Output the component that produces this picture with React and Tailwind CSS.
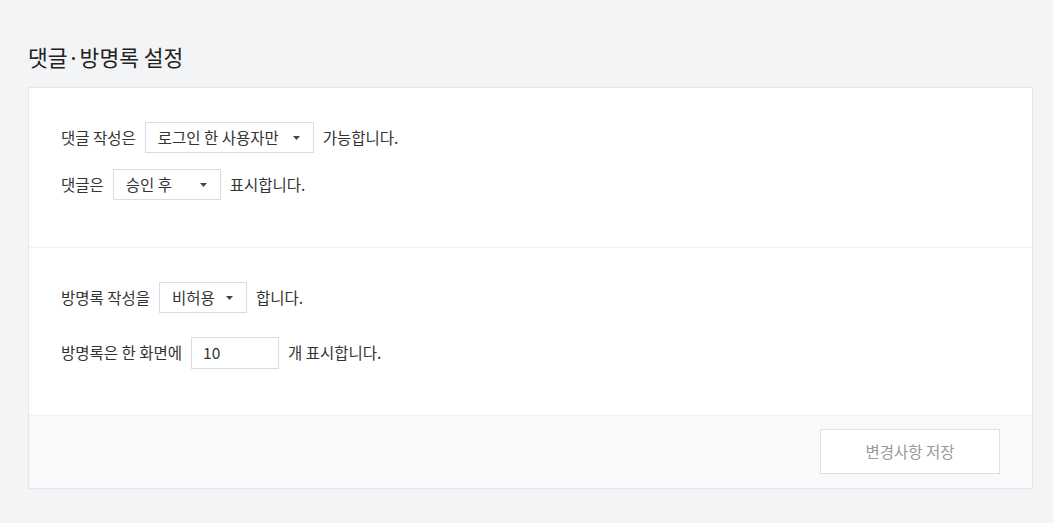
const font = { fontFamily: '"Noto Sans CJK KR", "Noto Sans", sans-serif' };

function Caret() {
  return (
    <svg width="7" height="4" viewBox="0 0 7 4" className="shrink-0">
      <path d="M0 0h7L3.5 4z" fill="#444" />
    </svg>
  );
}

function Select({ value, width }) {
  return (
    <div
      className={`flex h-[31px] items-center justify-between border border-[#d9dce0] bg-white pl-3 pr-[13px] text-[15.5px] text-[#333] ${width}`}
    >
      <span>{value}</span>
      <Caret />
    </div>
  );
}

function Row({ children }) {
  return <div className="flex h-[31px] items-center gap-[9px] text-[15.5px] text-[#333]">{children}</div>;
}

export default function App() {
  return (
    <div className="min-h-[523px] bg-[#f3f4f6] px-[28px] pt-[42px]" style={font}>
      <h2 className="mb-[15px] text-[21.5px] leading-[30px] text-[#222]">댓글·방명록 설정</h2>
      <div className="w-[1005px] border border-[#e3e5e8] bg-white">
        <section className="flex flex-col gap-[16px] border-b border-[#eef0f2] px-[32px] pt-[34px] pb-[47px]">
          <Row>
            <span>댓글 작성은</span>
            <Select value="로그인 한 사용자만" width="w-[169px]" />
            <span>가능합니다.</span>
          </Row>
          <Row>
            <span>댓글은</span>
            <Select value="승인 후" width="w-[108px]" />
            <span>표시합니다.</span>
          </Row>
        </section>
        <section className="flex flex-col gap-[24px] border-b border-[#eef0f2] px-[32px] pt-[34px] pb-[46px]">
          <Row>
            <span>방명록 작성을</span>
            <Select value="비허용" width="w-[88px]" />
            <span>합니다.</span>
          </Row>
          <div className="flex h-[32px] items-center gap-[9px] text-[15.5px] text-[#333]">
            <span>방명록은 한 화면에</span>
            <div className="flex h-[32px] w-[88px] items-center border border-[#d9dce0] bg-white pl-[11px] text-[15.5px] text-[#333]">
              10
            </div>
            <span>개 표시합니다.</span>
          </div>
        </section>
        <div className="flex justify-end bg-[#f8f9fb] pt-[13px] pr-[32px] pb-[14px]">
          <button className="h-[45px] w-[180px] border border-[#dcdfe3] bg-white text-[15.5px] text-[#999]">
            변경사항 저장
          </button>
        </div>
      </div>
    </div>
  );
}
